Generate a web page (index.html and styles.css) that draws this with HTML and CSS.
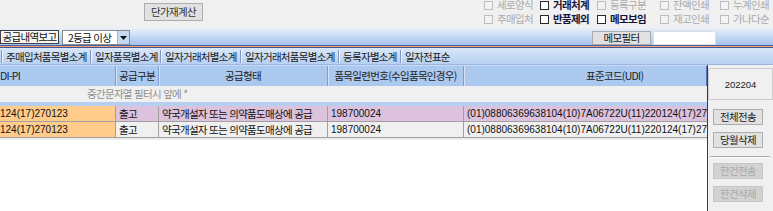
FILE: index.html
```html
<!DOCTYPE html>
<html lang="ko">
<head>
<meta charset="utf-8">
<title>공급내역보고</title>
<link rel="stylesheet" href="styles.css">
</head>
<body>
<div class="app">
  <div class="top">
    <button class="btn recalc">단가재계산</button>
    <div class="checks">
      <div class="chk dis"><span class="box"></span><span class="lbl">세로양식</span></div>
      <div class="chk on"><span class="box"></span><span class="lbl">거래처계</span></div>
      <div class="chk dis"><span class="box"></span><span class="lbl">등록구분</span></div>
      <div class="chk dis"><span class="box"></span><span class="lbl">잔액인쇄</span></div>
      <div class="chk dis"><span class="box"></span><span class="lbl">누계인쇄</span></div>
      <div class="chk dis"><span class="box"></span><span class="lbl">주매입처</span></div>
      <div class="chk on"><span class="box"></span><span class="lbl">반품제외</span></div>
      <div class="chk on"><span class="box"></span><span class="lbl">메모보임</span></div>
      <div class="chk dis"><span class="box"></span><span class="lbl">재고인쇄</span></div>
      <div class="chk dis"><span class="box"></span><span class="lbl">가나다순</span></div>
    </div>
  </div>
  <div class="band">
    <div class="title">공급내역보고</div>
    <div class="select">
      <span class="sel-text">2등급 이상</span>
      <span class="sel-btn"><svg width="7" height="4" viewBox="0 0 7 4"><path d="M0 0H7L3.5 4Z" fill="#111"/></svg></span>
    </div>
    <button class="btn memo">메모필터</button>
    <div class="memo-input"></div>
  </div>
  <div class="rule"></div>
  <div class="tabs">
    <div class="tab w1">주매입처품목별소계</div>
    <div class="tab w2">일자품목별소계</div>
    <div class="tab w3">일자거래처별소계</div>
    <div class="tab w4">일자거래처품목별소계</div>
    <div class="tab w5">등록자별소계</div>
    <div class="tab w6">일자전표순</div>
  </div>
  <div class="main">
    <div class="grid">
      <div class="row head">
        <div class="cell c1 left">DI-PI</div>
        <div class="cell c2">공급구분</div>
        <div class="cell c3">공급형태</div>
        <div class="cell c4">품목일련번호(수입품목인경우)</div>
        <div class="cell c5 udi">표준코드(UDI)</div>
      </div>
      <div class="filter">중간문자열 필터시 앞에 *</div>
      <div class="gap"></div>
      <div class="row data picked">
        <div class="cell c1 num key">124(17)270123</div>
        <div class="cell c2">출고</div>
        <div class="cell c3">약국개설자 또는 의약품도매상에 공급</div>
        <div class="cell c4 num">198700024</div>
        <div class="cell c5 num">(01)08806369638104(10)7A06722U(11)220124(17)270123</div>
      </div>
      <div class="row data">
        <div class="cell c1 num key">124(17)270123</div>
        <div class="cell c2">출고</div>
        <div class="cell c3">약국개설자 또는 의약품도매상에 공급</div>
        <div class="cell c4 num">198700024</div>
        <div class="cell c5 num">(01)08806369638104(10)7A06722U(11)220124(17)270123</div>
      </div>
      <div class="empty"></div>
    </div>
    <div class="panel">
      <div class="period">202204</div>
      <button class="btn side b1">전체전송</button>
      <button class="btn side b2">당월삭제</button>
      <div class="sep"></div>
      <button class="btn side b3 off">한건전송</button>
      <button class="btn side b4 off">한건삭제</button>
    </div>
  </div>
</div>
</body>
</html>
```

FILE: styles.css
```css
* { box-sizing: border-box; margin: 0; padding: 0; }
html, body { width: 773px; height: 211px; overflow: hidden; background: #ffffff; }
body {
  font-family: "Noto Sans CJK KR", "Liberation Sans", sans-serif;
  font-size: 10.5px;
  letter-spacing: -0.7px;
  color: #1e1e1e;
}
.app { width: 773px; height: 211px; display: flex; flex-direction: column; }

.btn {
  font-family: inherit;
  font-size: 10.5px;
  letter-spacing: -0.7px;
  background: #e1e1e1;
  border: 1px solid #adadad;
  color: #222;
  display: flex;
  align-items: center;
  justify-content: center;
  line-height: 1;
  white-space: nowrap;
}

/* top area */
.top { height: 28px; background: #f0f0f0; display: flex; align-items: flex-start; }
.recalc { width: 59px; height: 18px; margin: 3px 0 0 144px; color: #333; }
.checks {
  display: grid;
  grid-template-columns: 56px 57px 63px 60px 53px;
  grid-auto-rows: 14px;
  margin: -2px 0 0 281px;
}
.chk { display: flex; align-items: center; gap: 4px; white-space: nowrap; line-height: 14px; }
.box { width: 9px; height: 9px; border: 1px solid #2a2a2a; background: #ffffff; flex: none; }
.chk.dis .box { border-color: #bdbdbd; background: #f3f3f3; }
.chk.dis .lbl { color: #ababab; }
.chk.on .lbl { color: #14143c; font-weight: 700; }

/* band */
.band {
  height: 17px;
  background: linear-gradient(#e8f0fb, #a4c3ee);
  display: flex;
  align-items: flex-start;
}
.title {
  margin-top: 2px;
  width: 59px;
  height: 14px;
  border: 1px solid #404040;
  background: #f6f6f6;
  line-height: 12px;
  text-align: center;
  color: #111;
  white-space: nowrap;
}
.select {
  margin: 2px 0 0 3px;
  width: 68px;
  height: 15px;
  background: #ffffff;
  border: 1px solid #8a8a8a;
  display: flex;
}
.sel-text { flex: 1; padding-left: 5px; line-height: 13px; color: #111; white-space: nowrap; }
.sel-btn {
  width: 12px;
  background: #c6d8f2;
  border-left: 1px solid #9fb6dc;
  display: flex;
  align-items: center;
  justify-content: center;
}
.memo { width: 59px; height: 14px; margin: 3px 0 0 462px; }
.memo-input { width: 63px; height: 14px; margin: 3px 0 0 2px; background: #ffffff; border: 1px solid #dedede; }

/* decorative rule */
.rule {
  height: 3px;
  background: #f2a264;
  border-top: 1px solid #4b5fa6;
  border-bottom: 1px solid #46559a;
}

/* tabs */
.tabs {
  height: 17px;
  background: linear-gradient(#d9e7f9, #b7cff1);
  display: flex;
  align-items: center;
  padding-left: 1px;
  border-bottom: 1px solid #9db7e0;
}
.tab {
  height: 13px;
  line-height: 13px;
  padding-left: 4px;
  border-left: 1px solid #8196bd;
  box-shadow: inset 1px 0 0 #eef4fc;
  white-space: nowrap;
  color: #1a1a1a;
}
.w1 { width: 89px; }
.w2 { width: 70px; }
.w3 { width: 80px; }
.w4 { width: 98px; }
.w5 { width: 62px; }
.w6 { width: 50px; }

/* main */
.main { flex: 1; display: flex; min-height: 0; }
.grid { width: 707px; display: flex; flex-direction: column; background: #ffffff; }
.row { display: flex; }
.cell {
  white-space: nowrap;
  overflow: hidden;
  border-right: 1px solid #a0a0a0;
  padding-left: 3px;
}
.c1 { width: 116px; }
.c2 { width: 43px; }
.c3 { width: 169px; }
.c4 { width: 136px; }
.c5 { width: 243px; border-right: none; }

.head { height: 21px; background: #abc8ef; border-top: 1px solid #c8dbf5; }
.head .cell {
  line-height: 20px;
  text-align: center;
  padding-left: 0;
  border-right: 1px solid #7d9dd2;
  box-shadow: inset 1px 0 0 #d3e2f8;
  color: #222;
}
.head .left { text-align: left; padding-left: 0; box-shadow: none; }
.head .udi { text-align: left; padding-left: 122px; border-right: 1px solid #5676b8; }

.filter {
  height: 16px;
  line-height: 16px;
  background: #f0f0f0;
  color: #8e8e8e;
  padding-left: 87px;
}
.gap { height: 4px; background: #b6cef0; }

.data { height: 16px; border-bottom: 1px solid #a0a0a0; background: #f0f0f0; }
.data .cell { line-height: 15px; color: #111; }
.data.picked { background: #dcc2dc; }
.data .key { background: #ffcc8c; padding-left: 0; }
.num {
  font-family: "Liberation Sans", sans-serif;
  font-size: 10px;
  letter-spacing: 0;
}
.empty { flex: 1; border-top: 2px solid #ececec; background: #ffffff; }

/* side panel */
.panel {
  width: 66px;
  border-left: 1px solid #1d3a94;
  background: #f0f0f0;
  padding-top: 3px;
  display: flex;
  flex-direction: column;
}
.period {
  height: 32px;
  border: 1px solid #cdcdcd;
  display: flex;
  align-items: center;
  justify-content: center;
  font-family: "Liberation Sans", sans-serif;
  font-size: 9.5px;
  letter-spacing: 0;
  color: #222;
}
.side { width: 50px; height: 16px; margin-left: 5px; }
.b1 { margin-top: 9px; }
.b2 { margin-top: 7px; }
.sep { height: 2px; margin: 8px 3px 0 2px; border-top: 1px solid #a8a8a8; border-bottom: 1px solid #ffffff; }
.b3 { margin-top: 5px; }
.b4 { margin-top: 7px; }
.off { background: #d2d2d2; border-color: #c6c6c6; color: #a9a9a9; }
```
